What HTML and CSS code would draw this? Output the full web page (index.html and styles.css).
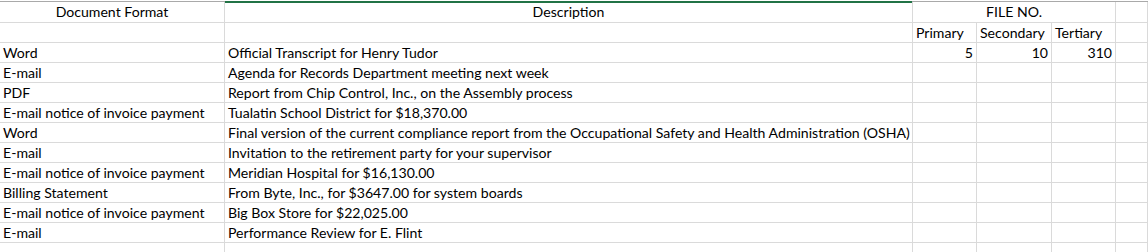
FILE: index.html
```html
<!DOCTYPE html>
<html>
<head>
<meta charset="utf-8">
<link rel="stylesheet" href="styles.css">
</head>
<body>
<div class="sheet">
  <div class="selbar"></div>
  <div class="grid">
    <div class="c hdr center">Document Format</div>
    <div class="c hdr center">Description</div>
    <div class="c hdr center span3">FILE NO.</div>
    <div class="c hdr"></div>

    <div class="c"></div>
    <div class="c"></div>
    <div class="c">Primary</div>
    <div class="c">Secondary</div>
    <div class="c">Tertiary</div>
    <div class="c"></div>

    <div class="c">Word</div>
    <div class="c">Official Transcript for Henry Tudor</div>
    <div class="c num">5</div>
    <div class="c num">10</div>
    <div class="c num">310</div>
    <div class="c"></div>

    <div class="c">E-mail</div>
    <div class="c">Agenda for Records Department meeting next week</div>
    <div class="c"></div><div class="c"></div><div class="c"></div><div class="c"></div>

    <div class="c">PDF</div>
    <div class="c">Report from Chip Control, Inc., on the Assembly process</div>
    <div class="c"></div><div class="c"></div><div class="c"></div><div class="c"></div>

    <div class="c">E-mail notice of invoice payment</div>
    <div class="c">Tualatin School District for $18,370.00</div>
    <div class="c"></div><div class="c"></div><div class="c"></div><div class="c"></div>

    <div class="c">Word</div>
    <div class="c">Final version of the current compliance report from the Occupational Safety and Health Administration (OSHA)</div>
    <div class="c"></div><div class="c"></div><div class="c"></div><div class="c"></div>

    <div class="c">E-mail</div>
    <div class="c">Invitation to the retirement party for your supervisor</div>
    <div class="c"></div><div class="c"></div><div class="c"></div><div class="c"></div>

    <div class="c">E-mail notice of invoice payment</div>
    <div class="c">Meridian Hospital for $16,130.00</div>
    <div class="c"></div><div class="c"></div><div class="c"></div><div class="c"></div>

    <div class="c">Billing Statement</div>
    <div class="c">From Byte, Inc., for $3647.00 for system boards</div>
    <div class="c"></div><div class="c"></div><div class="c"></div><div class="c"></div>

    <div class="c">E-mail notice of invoice payment</div>
    <div class="c">Big Box Store for $22,025.00</div>
    <div class="c"></div><div class="c"></div><div class="c"></div><div class="c"></div>

    <div class="c">E-mail</div>
    <div class="c">Performance Review for E. Flint</div>
    <div class="c"></div><div class="c"></div><div class="c"></div><div class="c"></div>

    <div class="c"></div><div class="c"></div><div class="c"></div><div class="c"></div><div class="c"></div><div class="c"></div>
  </div>
</div>
</body>
</html>
```

FILE: styles.css
```css
html, body {
  margin: 0;
  padding: 0;
  background: #fff;
  overflow: hidden;
}
body {
  width: 1148px;
  height: 252px;
}
.sheet {
  position: relative;
  height: 252px;
  overflow: hidden;
  box-sizing: border-box;
  padding-top: 1px;
  font-family: Lato, "Liberation Sans", sans-serif;
  font-size: 14.1px;
  color: #000;
}
.selbar {
  position: absolute;
  left: 225px;
  top: 1px;
  width: 687px;
  height: 2px;
  background: #217346;
}
.grid {
  display: grid;
  grid-template-columns: 225px 688px 64px 75px 64px 1fr;
  grid-template-rows: 21px;
  grid-auto-rows: 20px;
  border-top: 1px solid #a9a9a9;
}
.c {
  box-sizing: border-box;
  border-right: 1px solid #dadada;
  border-bottom: 1px solid #dadada;
  padding: 0 3px;
  line-height: 19px;
  white-space: nowrap;
}
.hdr {
  line-height: 20px;
}
.center { text-align: center; }
.span3 { grid-column: span 3; }
.num { text-align: right; }
```
